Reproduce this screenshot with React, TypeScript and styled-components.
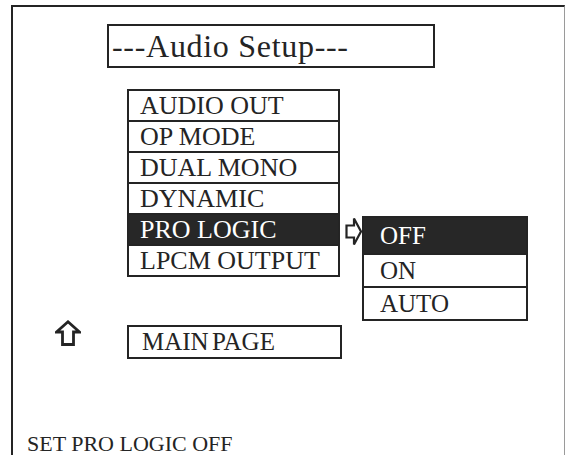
import React from 'react';
import styled, { createGlobalStyle } from 'styled-components';

const ink = '#242424';
const serif = '"Liberation Serif", "Times New Roman", serif';

const GlobalStyle = createGlobalStyle`
  html, body {
    margin: 0;
    padding: 0;
    background: #ffffff;
  }
  body {
    font-family: ${serif};
    color: ${ink};
    overflow: hidden;
  }
`;

const Frame = styled.div`
  box-sizing: border-box;
  width: 554px;
  height: 450px;
  margin: 5px 0 0 11px;
  border-top: 2px solid ${ink};
  border-left: 2px solid ${ink};
  border-right: 1px solid #9a9a9a;
  display: flex;
  flex-direction: column;
  font-family: ${serif};
`;

const Title = styled.div`
  box-sizing: border-box;
  width: 328px;
  height: 44px;
  margin: 17px 0 0 94px;
  padding-left: 3px;
  border: 2px solid ${ink};
  font-size: 32px;
  line-height: 40px;
  letter-spacing: 0.7px;
  white-space: nowrap;
`;

const MenuArea = styled.div`
  display: flex;
  align-items: flex-start;
  margin: 21px 0 0 114px;
`;

const Menu = styled.div`
  box-sizing: border-box;
  width: 213px;
  border: 2px solid ${ink};
  display: flex;
  flex-direction: column;
`;

const Row = styled.div<{ $active?: boolean; $h?: number; $pad?: number; $size?: number }>`
  height: ${(p) => p.$h ?? 29}px;
  padding-left: ${(p) => p.$pad ?? 11}px;
  display: flex;
  align-items: center;
  font-size: ${(p) => p.$size ?? 26}px;
  white-space: nowrap;
  background: ${(p) => (p.$active ? '#272727' : 'transparent')};
  color: ${(p) => (p.$active ? '#ffffff' : ink)};
  & + & {
    border-top: 2px solid ${ink};
  }
`;

const SubArea = styled.div`
  display: flex;
  align-items: flex-start;
  margin: 127px 0 0 5px;
`;

const Pointer = styled.svg`
  display: block;
  margin-top: 1px;
`;

const SubMenu = styled(Menu)`
  width: 166px;
`;

const MainRow = styled.div`
  display: flex;
  align-items: flex-start;
  margin: 4px 0 0 42px;
`;

const UpArrow = styled.svg`
  display: block;
  margin: -5px 46px 0 0;
`;

const MainButton = styled.div`
  box-sizing: border-box;
  width: 215px;
  height: 34px;
  padding-left: 13px;
  border: 2px solid ${ink};
  display: flex;
  align-items: center;
  font-size: 25px;
  word-spacing: -3px;
  white-space: nowrap;
`;

const Status = styled.div`
  margin-top: auto;
  padding: 0 0 0 14px;
  font-size: 22px;
  line-height: 22px;
  height: 22px;
  white-space: nowrap;
`;

const items = ['AUDIO OUT', 'OP MODE', 'DUAL MONO', 'DYNAMIC', 'PRO LOGIC', 'LPCM OUTPUT'];
const options = ['OFF', 'ON', 'AUTO'];

const App = () => (
  <>
    <GlobalStyle />
    <Frame>
      <Title>---Audio Setup---</Title>
      <MenuArea>
        <Menu>
          {items.map((item) => (
            <Row key={item} $active={item === 'PRO LOGIC'}>
              {item}
            </Row>
          ))}
        </Menu>
        <SubArea>
          <Pointer width="17" height="29" viewBox="0 0 17 29">
            <path
              d="M1.5 8.5 H9 V1.5 L16 14.5 L9 27.5 V20.5 H1.5 Z"
              fill="#fff"
              stroke={ink}
              strokeWidth="2.2"
              strokeLinejoin="miter"
            />
          </Pointer>
          <SubMenu>
            {options.map((opt, i) => (
              <Row key={opt} $active={opt === 'OFF'} $h={i === 0 ? 35 : 31} $pad={16} $size={25}>
                {opt}
              </Row>
            ))}
          </SubMenu>
        </SubArea>
      </MenuArea>
      <MainRow>
        <UpArrow width="26" height="26" viewBox="0 0 26 26">
          <path
            d="M13 1.8 L24.5 12 H18.5 V24.5 H7.5 V12 H1.5 Z"
            fill="#fff"
            stroke={ink}
            strokeWidth="2.8"
            strokeLinejoin="miter"
          />
        </UpArrow>
        <MainButton>MAIN PAGE</MainButton>
      </MainRow>
      <Status>SET PRO LOGIC OFF</Status>
    </Frame>
  </>
);

export default App;
